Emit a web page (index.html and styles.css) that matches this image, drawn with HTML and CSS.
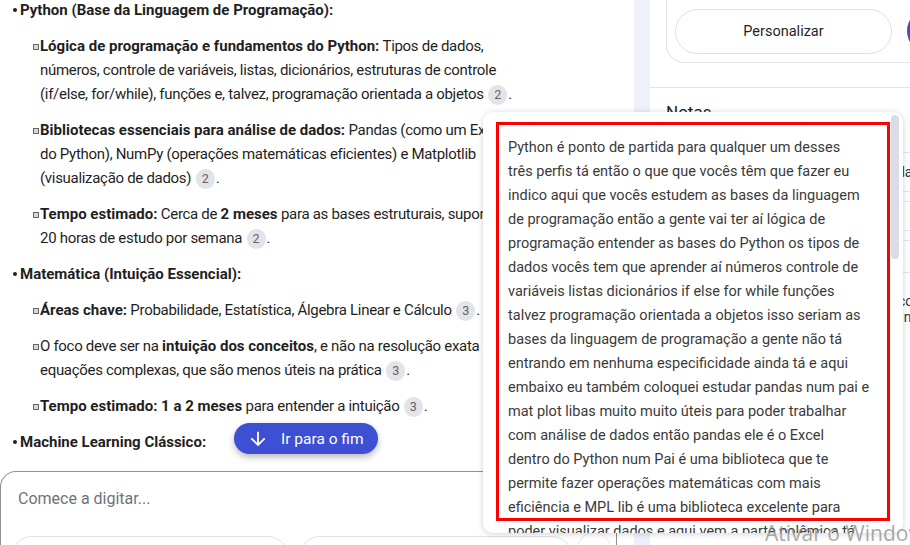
FILE: index.html
```html
<!DOCTYPE html>
<html lang="pt">
<head>
<meta charset="utf-8">
<title>Chat</title>
<link rel="stylesheet" href="styles.css">
</head>
<body>
<div class="app">
  <main class="chat">
    <div class="messages">
      <ul class="l1">
        <li><b>Python (Base da Linguagem de Programação):</b>
          <ul class="l2">
            <li><b>Lógica de programação e fundamentos do Python:</b> Tipos de dados, números, controle de variáveis, listas, dicionários, estruturas de controle (if/else, for/while), funções e, talvez, programação orientada a objetos <span class="cite">2</span>.</li>
            <li><b>Bibliotecas essenciais para análise de dados:</b> Pandas (como um Excel do Python), NumPy (operações matemáticas eficientes) e Matplotlib (visualização de dados) <span class="cite">2</span>.</li>
            <li><b>Tempo estimado:</b> Cerca de <b>2 meses</b> para as bases estruturais, supondo 20 horas de estudo por semana <span class="cite">2</span>.</li>
          </ul>
        </li>
        <li><b>Matemática (Intuição Essencial):</b>
          <ul class="l2">
            <li><b>Áreas chave:</b> Probabilidade, Estatística, Álgebra Linear e Cálculo <span class="cite">3</span>.</li>
            <li>O foco deve ser na <b>intuição dos conceitos</b>, e não na resolução exata de equações complexas, que são menos úteis na prática <span class="cite">3</span>.</li>
            <li><b>Tempo estimado: 1 a 2 meses</b> para entender a intuição <span class="cite">3</span>.</li>
          </ul>
        </li>
        <li><b>Machine Learning Clássico:</b></li>
      </ul>
    </div>
    <div class="composer">
      <div class="placeholder">Comece a digitar...</div>
      <div class="chips">
        <span class="chip"></span>
        <span class="chip chip-2"></span>
        <span class="send"></span>
      </div>
    </div>
    <button class="jump">
      <svg class="jump-icon" viewBox="0 0 24 24" width="22" height="22"><path d="M20 12l-1.41-1.41L13 16.17V4h-2v12.17l-5.58-5.59L4 12l8 8 8-8z" fill="#fff"/></svg>
      <span>Ir para o fim</span>
    </button>
  </main>

  <aside class="side">
    <div class="side-head">
      <div class="actions">
        <button class="pill">Personalizar</button>
        <span class="round-btn"></span>
      </div>
    </div>
    <section class="notes">
      <h2 class="notes-title">Notas</h2>
      <div class="note note-a">Roteiro de estudos para ciência de dados e carreira</div>
      <div class="note note-b"></div>
      <div class="note note-c"></div>
      <p class="note-text">Resumo do plano de estudo com tópicos técnicos<br>e sugestões de cursos para iniciantes no<br>caminho de dados</p>
    </section>
  </aside>

  <div class="popup">
    <p class="transcript">Python é ponto de partida para qualquer um desses<br>três perfis tá então o que que vocês têm que fazer eu<br>indico aqui que vocês estudem as bases da linguagem<br>de programação então a gente vai ter aí lógica de<br>programação entender as bases do Python os tipos de<br>dados vocês tem que aprender aí números controle de<br>variáveis listas dicionários if else for while funções<br>talvez programação orientada a objetos isso seriam as<br>bases da linguagem de programação a gente não tá<br>entrando em nenhuma especificidade ainda tá e aqui<br>embaixo eu também coloquei estudar pandas num pai e<br>mat plot libas muito muito úteis para poder trabalhar<br>com análise de dados então pandas ele é o Excel<br>dentro do Python num Pai é uma biblioteca que te<br>permite fazer operações matemáticas com mais<br>eficiência e MPL lib é uma biblioteca excelente para<br>poder visualizar dados e aqui vem a parte polêmica tá</p>
    <div class="thumb"></div>
    <div class="highlight"></div>
  </div>

  <div class="watermark">Ativar o Windows</div>
</div>
</body>
</html>
```

FILE: styles.css
```css
* { box-sizing: border-box; margin: 0; padding: 0; }
html, body { width: 910px; height: 545px; overflow: hidden; }
body {
  background: #eef0fa;
  font-family: Roboto, "Noto Sans", sans-serif;
  color: #1f1f1f;
}
.app { position: relative; display: flex; gap: 16px; height: 545px; }

/* chat column */
.chat {
  position: relative;
  width: 634px;
  flex-shrink: 0;
  background: #fff;
  display: flex;
  flex-direction: column;
}
.messages {
  flex: 1; overflow: hidden;
  font-size: 15px; line-height: 24px; letter-spacing: -0.3px;
}
.l1 { list-style: none; margin-top: -2px; padding-left: 20px; width: 520px; }
.l1 > li { position: relative; margin-top: 12px; }
.l1 > li:first-child { margin-top: 0; }
.l1 > li::before {
  content: ""; position: absolute; left: -7px; top: 10px;
  width: 4px; height: 4px; border-radius: 50%; background: #1f1f1f;
}
.l2 { list-style: none; padding-left: 20px; }
.l2 > li { position: relative; margin-top: 12px; }
.l2 > li::before {
  content: ""; position: absolute; left: -7px; top: 10px;
  width: 4px; height: 4px; border: 1px solid #666; background: #d8d8d8;
}
b { font-weight: 700; letter-spacing: 0; }
.cite {
  display: inline-block; width: 19px; height: 20px; border-radius: 10px;
  background: #e3e3e8; color: #5f6368;
  font-size: 12.5px; line-height: 20px; text-align: center; letter-spacing: 0;
  vertical-align: 0; margin: -4px 1px;
}

.composer {
  height: 74px; width: 617px;
  border: 1px solid #8f8f8f; border-bottom: none;
  border-radius: 16px 16px 0 0;
  padding: 17px 0 0 11px;
}
.placeholder { padding-left: 6px; font-size: 16px; line-height: 20px; color: #6f7378; }
.chips { display: flex; gap: 12px; margin-top: 27px; }
.chip { width: 276px; height: 40px; border: 1px solid #dfe2ec; border-radius: 20px; }
.chip-2 { width: 272px; }
.send {
  width: 32px; height: 32px; margin-left: -6px; margin-top: -3px;
  border-radius: 50%; background: #fff; box-shadow: 0 0 2px rgba(0,0,0,.2);
}

.jump {
  position: absolute; left: 234px; top: 423px;
  width: 144px; height: 31px;
  display: flex; align-items: center; gap: 12px;
  padding-left: 13px;
  border: none; border-radius: 16px;
  background: #3d4fd3; color: #fff;
  font-family: Roboto, sans-serif; font-size: 15.5px;
  box-shadow: 0 3px 7px rgba(0,0,0,.28);
}
.jump-icon { flex-shrink: 0; }

/* side panel */
.side { width: 260px; flex-shrink: 0; background: #fff; overflow: hidden; }
.side-head {
  height: 88px; border-bottom: 1px solid #e1e3ec; padding-left: 16px;
  display: flex; flex-direction: column;
}
.actions {
  margin-top: -20px; height: 83px; width: 280px; flex-shrink: 0;
  border: 1px solid #e2e5ef; border-top: none; border-right: none;
  border-radius: 0 0 0 18px;
  display: flex; align-items: flex-end; gap: 15px;
  padding: 0 0 8px 8px;
}
.pill {
  width: 217px; height: 45px; flex-shrink: 0;
  border: 1px solid #dde0ee; border-radius: 23px; background: #fff;
  font-family: Roboto, sans-serif; font-size: 14.5px; color: #1f1f1f;
}
.round-btn { width: 44px; height: 44px; flex-shrink: 0; border-radius: 50%; background: #3d4fd3; margin-bottom: 1px; }
.notes { padding: 12px 16px 0 16px; }
.notes-title { font-size: 17px; line-height: 24px; font-weight: 400; color: #1f1f1f; }
.note {
  border: 1px solid #e3e5ee; border-radius: 8px; border-right: none;
  margin-right: -30px; font-size: 14px; color: #333; white-space: nowrap; overflow: hidden;
}
.note-a { margin-top: 28px; height: 40px; line-height: 38px; padding-left: 12px; }
.note-b { margin-top: 9px; height: 30px; }
.note-c { margin-top: 9px; height: 33px; }
.note-text { margin-top: 20px; font-size: 14px; line-height: 16px; color: #333; white-space: nowrap; }

/* transcript popup */
.popup {
  position: absolute; left: 483px; top: 112px;
  width: 420px; height: 421px;
  background: #fff; border-radius: 10px;
  box-shadow: 0 1px 6px rgba(0,0,0,.18);
  overflow: hidden;
}
.transcript {
  padding: 24px 0 0 25px;
  font-size: 14.5px; line-height: 24px; color: #3a3a3a;
  white-space: nowrap;
}
.highlight {
  position: absolute; left: 13px; top: 10px;
  width: 394px; height: 399px;
  border: 3px solid #ff0000;
}
.thumb {
  position: absolute; left: 408px; top: 3px;
  width: 8px; height: 144px; border-radius: 4px; background: #dadde7;
}

.watermark {
  position: absolute; left: 765px; top: 519px;
  font-family: "Open Sans", "Noto Sans", sans-serif; font-size: 21px;
  color: rgba(140,140,140,.75); white-space: nowrap;
}
```
